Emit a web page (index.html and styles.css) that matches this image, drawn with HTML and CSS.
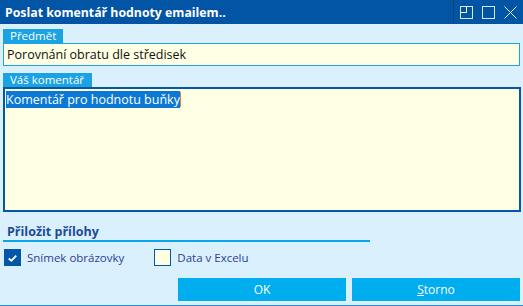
FILE: index.html
```html
<!DOCTYPE html>
<html lang="cs">
<head>
    <meta charset="UTF-8">
    <title>Poslat komentář hodnoty emailem..</title>
    <link rel="stylesheet" href="styles.css">
</head>
<body>
    <div class="dialog">
        <div class="titlebar">
            <span class="title">Poslat komentář hodnoty emailem..</span>
            <div class="title-buttons">
                <span class="sep"></span>
                <svg class="tb-icon" width="13" height="13" viewBox="0 0 13 13">
                    <rect x="0.5" y="0.5" width="12" height="12" fill="none" stroke="#fff" stroke-opacity="0.85"/>
                    <path d="M0.5 6.5 H6.5 V0.5" fill="none" stroke="#fff"/>
                </svg>
                <svg class="tb-icon" width="13" height="13" viewBox="0 0 13 13">
                    <rect x="0.5" y="0.5" width="12" height="12" fill="none" stroke="#fff" stroke-opacity="0.85"/>
                </svg>
                <svg class="tb-icon" width="13" height="13" viewBox="0 0 13 13">
                    <path d="M0.5 0.5 L12.5 12.5 M12.5 0.5 L0.5 12.5" stroke="#fff" stroke-opacity="0.9"/>
                </svg>
            </div>
        </div>

        <div class="content">
            <div class="field">
                <span class="tab">Předmět</span>
                <div class="input">Porovnání obratu dle středisek</div>
            </div>

            <div class="field comment-field">
                <span class="tab">Váš komentář</span>
                <div class="textarea"><span class="selected">Komentář pro hodnotu buňky</span><span class="caret"></span></div>
            </div>

            <div class="attach">
                <h3>Přiložit přílohy</h3>
                <div class="checks">
                    <label class="check"><span class="box checked">
                        <svg width="16" height="16" viewBox="0 0 16 16"><path d="M4 8.5 L6.8 11 L12 5.5" fill="none" stroke="#fff" stroke-width="2"/></svg>
                    </span>Snímek obrázovky</label>
                    <label class="check"><span class="box"></span>Data v Excelu</label>
                </div>
            </div>

            <div class="buttons">
                <button class="btn">OK</button>
                <button class="btn"><u>S</u>torno</button>
            </div>
        </div>
    </div>
</body>
</html>
```

FILE: styles.css
```css
* {
    margin: 0;
    padding: 0;
    box-sizing: border-box;
}

body {
    font-family: "Open Sans", "Noto Sans", sans-serif;
    background: #daf1fd;
    width: 523px;
    height: 306px;
    overflow: hidden;
}

.dialog {
    height: 306px;
    border-bottom: 1px solid #1e8ee0;
    display: flex;
    flex-direction: column;
}

.titlebar {
    height: 24px;
    background: #0254a5;
    display: flex;
    align-items: center;
    justify-content: space-between;
    padding-left: 5px;
    color: #fff;
}

.title {
    font-weight: 700;
    font-size: 12.3px;
}

.title-buttons {
    display: flex;
    align-items: center;
    height: 100%;
}

.sep {
    width: 1px;
    height: 100%;
    background: #1d3f6e;
    margin-right: 6px;
}

.tb-icon {
    margin-right: 9px;
}

.tb-icon:last-child {
    margin-right: 6px;
}

.content {
    flex: 1;
    padding: 5px 3px 3px 3px;
    display: flex;
    flex-direction: column;
}

.field {
    display: flex;
    flex-direction: column;
    align-items: flex-start;
}

.tab {
    background: #1aa2e2;
    color: #fff;
    font-size: 11.5px;
    line-height: 14px;
    height: 14px;
    padding: 0 7px 0 7px;
}

.input {
    width: 517px;
    height: 23px;
    background: #ffffe4;
    border: 1px solid #1ca5e5;
    font-size: 12.5px;
    line-height: 21px;
    padding-left: 3px;
    color: #111;
}

.comment-field {
    margin-top: 7px;
}

.comment-field .tab {
    padding-right: 8px;
}

.textarea {
    width: 518px;
    height: 125px;
    background: #ffffe4;
    border: 2px solid #0456a6;
    font-size: 12.5px;
    line-height: 17px;
    padding: 2px 0 0 1px;
    color: #111;
}

.selected {
    background: #0a78d4;
    color: #fff;
}

.caret {
    display: inline-block;
    width: 1px;
    height: 15px;
    background: #e0832a;
    vertical-align: -3px;
}

.attach {
    margin-top: 10px;
    width: 367px;
}

.attach h3 {
    font-size: 12.5px;
    font-weight: 700;
    color: #1c4a99;
    padding-left: 4px;
    height: 20px;
    line-height: 20px;
    border-bottom: 2px solid #0aa5ea;
}

.checks {
    display: flex;
    margin-top: 7px;
    padding-left: 1px;
}

.check {
    display: flex;
    align-items: center;
    font-size: 11.5px;
    color: #2c3c98;
    margin-right: 30px;
}

.box {
    width: 17px;
    height: 17px;
    border: 1px solid #0456a6;
    background: #ffffe4;
    margin-right: 6px;
    display: flex;
}

.box.checked {
    background: #0456a6;
}

.buttons {
    display: flex;
    justify-content: flex-end;
    gap: 6px;
    margin-top: auto;
    margin-bottom: 1px;
}

.btn {
    width: 168px;
    height: 23px;
    background: #00aeef;
    border: none;
    color: #fff;
    font-family: inherit;
    font-size: 12px;
}

.btn u {
    text-decoration-thickness: 1px;
}
```
